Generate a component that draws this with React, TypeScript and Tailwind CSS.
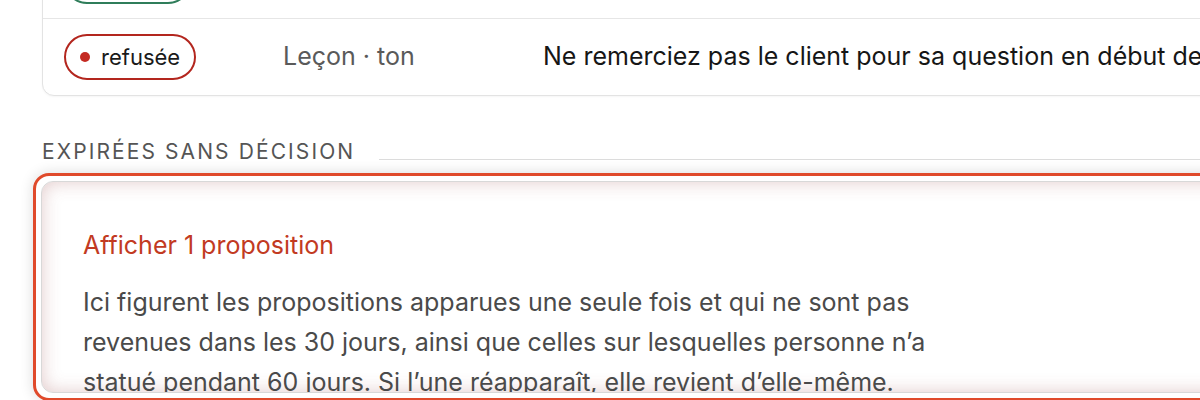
import React from "react";

type Row = {
  status: string;
  tone: "ok" | "ko";
  kind: string;
  text: string;
};

const rows: Row[] = [
  { status: "validée", tone: "ok", kind: "Leçon · format", text: "Proposer un lien vers la documentation à la fin de la réponse" },
  { status: "refusée", tone: "ko", kind: "Leçon · ton", text: "Ne remerciez pas le client pour sa question en début de réponse" },
];

function StatusPill({ status, tone }: { status: string; tone: Row["tone"] }) {
  const ok = tone === "ok";
  return (
    <span
      className={
        ok
          ? "inline-flex h-[46px] items-center gap-[11px] rounded-full border-2 border-[#2f7d5a] px-[14px] text-[22px] text-[#1a1a1a]"
          : "inline-flex h-[46px] items-center gap-[11px] rounded-full border-2 border-[#b3261e] px-[14px] text-[22px] text-[#1a1a1a]"
      }
    >
      <span className={ok ? "h-[10px] w-[10px] rounded-full bg-[#2f7d5a]" : "h-[10px] w-[10px] rounded-full bg-[#c42a22]"} />
      {status}
    </span>
  );
}

export default function App() {
  return (
    <div className="h-[400px] w-[1200px] overflow-hidden bg-white font-['Inter',sans-serif]">
      <div className="-mt-[58px] w-[1300px] pl-[42px]">
        <div className="overflow-hidden rounded-xl border border-[#e3e3e3] bg-white shadow-[0_1px_2px_rgba(0,0,0,0.04)]">
          {rows.map((r, i) => (
            <div
              key={i}
              className={
                i === 0
                  ? "grid h-[76px] grid-cols-[219px_260px_1fr] items-center border-b border-[#e6e6e6] pl-[21px]"
                  : "grid h-[76px] grid-cols-[219px_260px_1fr] items-center pl-[21px]"
              }
            >
              <div>
                <StatusPill status={r.status} tone={r.tone} />
              </div>
              <div className="text-[25px] text-[#5a5a5a]">{r.kind}</div>
              <div className="whitespace-nowrap text-[25px] text-[#161616]">{r.text}</div>
            </div>
          ))}
        </div>

        <div className="mt-[42px] flex items-end gap-[24px]">
          <h2 className="text-[21px] leading-[28px] tracking-[0.1em] text-[#555]">EXPIRÉES SANS DÉCISION</h2>
          <div className="mb-[6px] h-px flex-1 bg-[#dcdcdc]" />
        </div>

        <div className="-ml-[9px] mt-[7px] rounded-[16px] border-[3px] border-[#e04a2b] bg-white p-[5px] shadow-[0_0_14px_rgba(0,0,0,0.14)]">
          <div className="h-[212px] overflow-hidden rounded-xl border border-[#d8d8d8] bg-white px-[41px] pt-[48px] shadow-[inset_0_0_18px_rgba(160,80,80,0.3)]">
            <button className="text-[25px]/[30px] text-[#c23a22]">Afficher 1 proposition</button>
            <p className="mt-[22px] max-w-[852px] text-[25px]/[40px] text-[#4a4a4a]">
              Ici figurent les propositions apparues une seule fois et qui ne sont pas revenues dans les 30 jours, ainsi
              que celles sur lesquelles personne n’a statué pendant 60 jours. Si l’une réapparaît, elle revient
              d’elle-même.
            </p>
          </div>
        </div>
      </div>
    </div>
  );
}
